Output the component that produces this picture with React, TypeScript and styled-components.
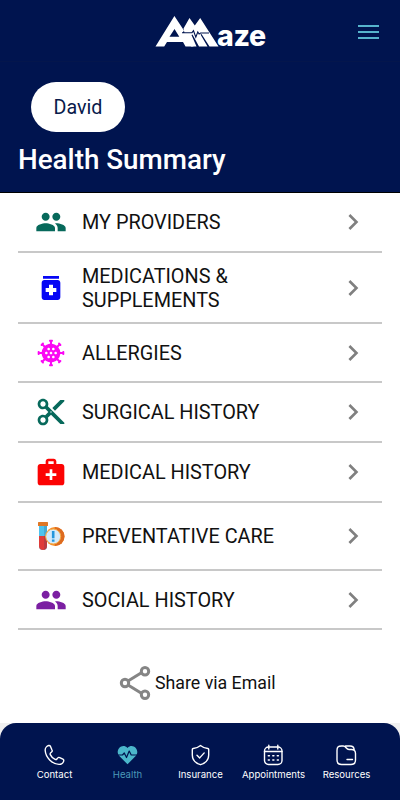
import React from "react";
import styled, { createGlobalStyle } from "styled-components";
import {
  MdChevronRight,
  MdContentCut,
  MdCoronavirus,
  MdMedicalServices,
  MdMedication,
  MdPeople,
} from "react-icons/md";

const navy = "#00144f";

const GlobalStyle = createGlobalStyle`
  *, *::before, *::after { box-sizing: border-box; }
  body { margin: 0; background: #fff; font-family: Roboto, sans-serif; }
`;

const Screen = styled.div`
  display: flex;
  flex-direction: column;
  width: 400px;
  height: 800px;
  overflow: hidden;
  background: #fff;
`;

const Header = styled.header`
  flex: none;
  height: 193px;
  background: ${navy};
  border-bottom: 1px solid #000;
`;

const TopBar = styled.div`
  display: grid;
  grid-template-columns: 155px 1fr 42px;
  height: 62px;
  border-bottom: 1px solid #04164c;
`;

const Logo = styled.div`
  display: flex;
  padding-top: 15px;
`;

const LogoText = styled.span`
  margin: 6px 0 0 -3px;
  height: 30px;
  color: #fff;
  font: 800 28.5px/30px Inter, sans-serif;
  letter-spacing: -0.3px;
`;

const MenuButton = styled.button`
  display: flex;
  flex-direction: column;
  gap: 4px;
  width: 21px;
  padding: 25px 0 0;
  border: 0;
  background: none;
`;

const MenuBar = styled.span`
  height: 2px;
  background: #56b4cd;
`;

const PersonChip = styled.button`
  display: block;
  width: 94px;
  height: 50px;
  margin: 20px 0 0 31px;
  padding: 1px 0 0;
  border: 0;
  border-radius: 25px;
  background: #fff;
  color: #091a4b;
  font: 400 19.7px/50px Roboto, sans-serif;
`;

const Title = styled.h1`
  margin: 10px 0 0 18px;
  color: #fff;
  font: 500 27.800px/35px Roboto, sans-serif;
`;

const List = styled.ul`
  flex: none;
  margin: 0 18px;
  padding: 0;
  list-style: none;
`;

const Row = styled.li<{ $height: number }>`
  display: grid;
  grid-template-columns: 64px 1fr 45px;
  align-items: center;
  height: ${(p) => p.$height}px;
  border-bottom: 2px solid #c8c8c8;
  color: #111;
`;

const RowIcon = styled.span<{ $color?: string }>`
  display: flex;
  padding-left: 17px;
  color: ${(p) => p.$color};
`;

const RowLabel = styled.span`
  padding-top: 2px;
  font-size: 19.85px;
  line-height: 23.5px;
  white-space: pre-line;
`;

const Chevron = styled(MdChevronRight)`
  color: #808080;
`;

const Share = styled.button`
  display: flex;
  align-items: center;
  align-self: flex-start;
  gap: 4px;
  height: 40px;
  margin: 33px 0 0 119px;
  padding: 0;
  border: 0;
  background: none;
  color: #111;
  font: 400 17.750px/24px Roboto, sans-serif;
`;

const NavBackdrop = styled.div`
  margin-top: auto;
  background: #f0f0f0;
`;

const Nav = styled.nav`
  display: grid;
  grid-template-columns: repeat(5, 73px);
  justify-content: center;
  height: 77px;
  padding: 21px 0 0 1px;
  border-radius: 16px 16px 0 0;
  background: ${navy};
`;

const NavItem = styled.a<{ $active?: boolean }>`
  display: flex;
  flex-direction: column;
  align-items: center;
  gap: 3px;
  color: ${(p) => (p.$active ? "#4bb7cb" : "#fff")};
`;

const NavLabel = styled.span<{ $active?: boolean }>`
  color: ${(p) => (p.$active ? "#4b9ab9" : "#fff")};
  font: 400 9.6px/12px Inter, sans-serif;
  white-space: nowrap;
`;

const LogoMark = () => (
  <svg width="65" height="34" viewBox="0 0 65 34" fill="#fff">
    <path d="M0.500 31.500 19.400 1 29 15.500 27.500 18 31.500 18 38.500 31.500H30.500L28 27H12L9.200 31.500Z M19.500 14 14.500 21.800H24.300Z" fillRule="evenodd" />
    <path d="M28.500 13.500 34.500 3 39.800 10.500 45.200 3 63.500 31.500H54.500L46.500 19 45.500 19.500 52.500 31.500H44L37.500 19.500 36.500 20 41.500 31.500H36L29.500 18Z" />
    <path d="M27 17.700h10l1.500-2 2.300 6.500 2-5.200 1.300 2 1.500-1H54" fill="none" stroke={navy} strokeWidth="1.1" />
  </svg>
);

const TestTube = () => (
  <svg width="32" height="34" viewBox="0 0 32 34">
    <path d="M4 6h8v21a4 4 0 0 1-8 0Z" fill="#4fc3ee" />
    <path d="M4 17h8v10a4 4 0 0 1-8 0Z" fill="#df3b38" />
    <path d="M9 6h3v21a4 4 0 0 1-3 3.8Z" fill="#193b65" opacity=".18" />
    <rect x="3" y="3" width="10" height="4" rx=".5" fill="#df7827" />
    <circle cx="20" cy="17.500" r="9.500" fill="#f58b25" />
    <path d="M20 8a9.500 9.500 0 0 1 0 19Z" fill="#dd6b20" />
    <circle cx="18.200" cy="17.500" r="7.500" fill="#d5eafb" stroke="#f6aa43" strokeWidth="1" />
    <path d="M18.200 12v7.200M18.200 20.500v2.200" stroke="#2596dc" strokeWidth="2.600" />
  </svg>
);

const ShareIcon = () => (
  <svg width="32" height="34" viewBox="0 0 32 34" fill="none" stroke="#858585" strokeWidth="3">
    <path d="m9 15 13-8M9 19l13 8" />
    <circle cx="6" cy="17" r="3.7" />
    <circle cx="26" cy="5.3" r="3.7" />
    <circle cx="26" cy="28.7" r="3.7" />
  </svg>
);

const navIcon = {
  width: 22,
  height: 22,
  viewBox: "0 0 22 22",
  fill: "none",
  stroke: "currentColor",
  strokeWidth: 1.4,
  strokeLinecap: "round" as const,
  strokeLinejoin: "round" as const,
};

const PhoneIcon = () => (
  <svg {...navIcon}>
    <path d="M4.700 1.500C2.700 2 1 4.300 1.200 6.500 1.700 13.500 8 20 15 20.400c2.100.1 4.100-1.400 4.700-3.300.2-.8-.1-1.500-.8-1.900l-3.200-1.600c-.8-.4-1.600-.2-2.100.5l-.7.900c-.4.600-1.100.700-1.800.4-2.200-1-3.800-2.600-4.800-4.800-.3-.7-.1-1.300.4-1.800l.9-.8c.6-.5.8-1.300.4-2L6.500 2.400c-.4-.7-1-1.100-1.800-.9Z" />
  </svg>
);

const HealthIcon = () => (
  <svg {...navIcon}>
    <path
      d="M10.500 20.300 2.300 12C-2.700 6.500 5.200-2 10.500 4c5.300-6 13.200 2.500 8.200 8Z"
      fill="currentColor"
      stroke="none"
    />
    <path d="M.500 11h5l1.800-2 2.200 4.500L12.200 7l2 4h6.300" stroke={navy} strokeWidth="1.200" />
  </svg>
);

const ShieldIcon = () => (
  <svg {...navIcon}>
    <path d="M10.500 1.500c-2 1.700-4.700 2.700-7.300 3-.6.1-.9.5-.9 1.100V11c0 4.800 3.400 8.200 8.200 9.700 4.800-1.500 8.200-4.900 8.200-9.700V5.600c0-.6-.3-1-.9-1.100-2.600-.3-5.300-1.300-7.300-3ZM7 11.300l2.700 2.600 4.500-5" />
  </svg>
);

const CalendarIcon = () => (
  <svg {...navIcon}>
    <rect x="1.500" y="3" width="17.500" height="17.500" rx="4" />
    <path d="M1.500 7.500H19M5.800 1.300V5M14.800 1.300V5" />
    <path d="M5.300 11.700h1.100M9.800 11.700h1.100M14.300 11.700h1.100M5.300 16h1.100M9.800 16h1.100M14.300 16h1.100" strokeWidth="1.500" />
  </svg>
);

const FolderIcon = () => (
  <svg {...navIcon}>
    <path d="M1 6.500C1 3 2 2 5.500 2h1.700c3 0 2.800 3.500 5.800 3.500h2.500c3 0 4 1.500 4 4V16c0 3-1.300 4.500-4.500 4.500H5.500C2.300 20.500 1 19 1 16ZM9.500 2H14c3 0 4 .800 4.200 3.700M11 15.500h5.500" />
  </svg>
);

const rows = [
  { label: "MY PROVIDERS", height: 60, color: "#07695b", icon: <MdPeople size={32} /> },
  { label: "MEDICATIONS &\nSUPPLEMENTS", height: 71, color: "#0606f5", icon: <MdMedication size={32} /> },
  { label: "ALLERGIES", height: 59, color: "#fb08f4", icon: <MdCoronavirus size={32} /> },
  { label: "SURGICAL HISTORY", height: 60, color: "#07695b", icon: <MdContentCut size={32} /> },
  { label: "MEDICAL HISTORY", height: 60, color: "#fc0303", icon: <MdMedicalServices size={32} /> },
  { label: "PREVENTATIVE CARE", height: 68, icon: <TestTube /> },
  { label: "SOCIAL HISTORY", height: 59, color: "#7b1fa2", icon: <MdPeople size={32} /> },
];

const tabs = [
  { label: "Contact", icon: <PhoneIcon /> },
  { label: "Health", icon: <HealthIcon />, active: true },
  { label: "Insurance", icon: <ShieldIcon /> },
  { label: "Appointments", icon: <CalendarIcon /> },
  { label: "Resources", icon: <FolderIcon /> },
];

export default function App() {
  return (
    <>
      <GlobalStyle />
      <Screen>
        <Header>
          <TopBar>
            <span />
            <Logo>
              <LogoMark />
              <LogoText>aze</LogoText>
            </Logo>
            <MenuButton aria-label="Menu">
              <MenuBar />
              <MenuBar />
              <MenuBar />
            </MenuButton>
          </TopBar>
          <PersonChip>David</PersonChip>
          <Title>Health Summary</Title>
        </Header>
        <List>
          {rows.map((row) => (
            <Row key={row.label} $height={row.height}>
              <RowIcon $color={row.color}>{row.icon}</RowIcon>
              <RowLabel>{row.label}</RowLabel>
              <Chevron size={32} />
            </Row>
          ))}
        </List>
        <Share>
          <ShareIcon />
          Share via Email
        </Share>
        <NavBackdrop>
          <Nav>
            {tabs.map((tab) => (
              <NavItem key={tab.label} $active={tab.active}>
                {tab.icon}
                <NavLabel $active={tab.active}>{tab.label}</NavLabel>
              </NavItem>
            ))}
          </Nav>
        </NavBackdrop>
      </Screen>
    </>
  );
}
